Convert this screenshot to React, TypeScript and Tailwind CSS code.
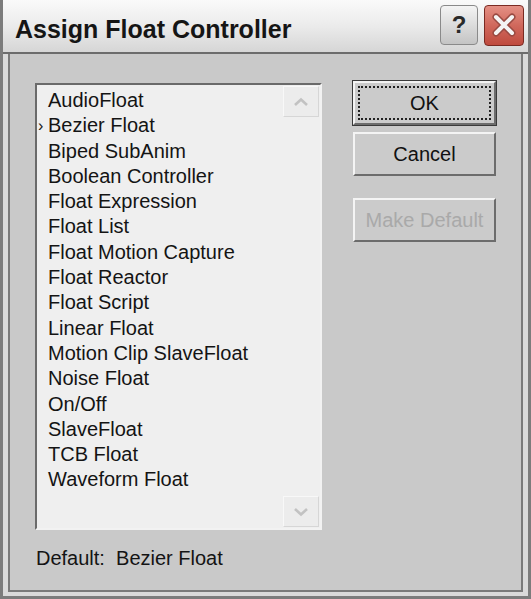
const items = [
  "AudioFloat",
  "Bezier Float",
  "Biped SubAnim",
  "Boolean Controller",
  "Float Expression",
  "Float List",
  "Float Motion Capture",
  "Float Reactor",
  "Float Script",
  "Linear Float",
  "Motion Clip SlaveFloat",
  "Noise Float",
  "On/Off",
  "SlaveFloat",
  "TCB Float",
  "Waveform Float",
];

function ScrollButton({ up }: { up?: boolean }) {
  return (
    <div className="flex h-[31px] w-[36px] items-center justify-center border border-t-[#f8f8f8] border-l-[#f8f8f8] border-r-[#d6d6d6] border-b-[#d6d6d6] bg-[#ececec]">
      <svg width="16" height="10" viewBox="0 0 16 10" className={up ? "" : "rotate-180"}>
        <path d="M2 8 L8 2.5 L14 8" fill="none" stroke="#c2c2c2" strokeWidth="2.6" />
      </svg>
    </div>
  );
}

function DialogButton({
  children,
  focused,
  disabled,
}: {
  children: string;
  focused?: boolean;
  disabled?: boolean;
}) {
  return (
    <button
      className={
        "relative h-[44px] w-[143px] border-2 border-t-[#f4f4f4] border-l-[#f4f4f4] border-r-[#6c6c6c] border-b-[#6c6c6c] bg-[#cbcbcb] text-[20px] leading-none " +
        (focused ? "outline outline-1 outline-[#3a3a3a] " : "") +
        (disabled ? "text-[#a9a9a9]" : "text-[#111]")
      }
    >
      {focused && (
        <span className="absolute inset-[3px] border-2 border-dotted border-[#222]" />
      )}
      {children}
    </button>
  );
}

export default function App() {
  return (
    <div
      className="flex h-[599px] w-[531px] flex-col overflow-hidden border-l-[3px] border-r-[3px] border-b-[3px] border-[#7c7c7c] bg-[#dadada]"
      style={{ fontFamily: '"Liberation Sans", Arial, sans-serif' }}
    >
      <div className="flex h-[54px] shrink-0 items-center justify-between border-b-2 border-[#6c6c6c] bg-gradient-to-b from-[#fafafa] via-[#ebebeb] to-[#d6d6d6] pl-[12px] pr-[4px]">
        <span className="pt-[6px] text-[25px] font-bold leading-none text-[#151515]">
          Assign Float Controller
        </span>
        <div className="flex gap-[6px] pb-[2px]">
          <div className="flex h-[40px] w-[38px] items-center justify-center rounded-[4px] border border-[#8a8a8a] bg-gradient-to-b from-[#f4f4f4] to-[#c4c4c4] text-[24px] font-bold text-[#2a2a2a]">
            ?
          </div>
          <div className="flex h-[41px] w-[40px] items-center justify-center rounded-[4px] border border-[#7a2a22] bg-gradient-to-b from-[#e49085] via-[#d0685c] to-[#bf4a3e]">
            <svg width="26" height="26" viewBox="0 0 26 26">
              <path d="M5 5 L21 21 M21 5 L5 21" stroke="#9a4a42" strokeWidth="7" strokeLinecap="round" />
              <path d="M5 5 L21 21 M21 5 L5 21" stroke="#f4f4f4" strokeWidth="4" strokeLinecap="round" />
            </svg>
          </div>
        </div>
      </div>

      <div className="flex flex-1 px-[5px] pb-[4px]">
        <div className="flex flex-1 gap-[31px] border-l-2 border-r-2 border-b-2 border-[#7a7a7a] bg-[#c9c9c9] pl-[25px] pt-[29px]">
          <div className="flex flex-col">
            <div className="flex h-[447px] w-[287px] border-2 border-t-[#6a6a6a] border-l-[#6a6a6a] border-r-[#f2f2f2] border-b-[#f2f2f2] bg-[#efefef]">
              <div className="flex flex-1 flex-col pt-[3px] text-[20px] leading-[25.3px] text-[#141414]">
                {items.map((item) => (
                  <div key={item} className="flex">
                    <span className="w-[11px] pl-[1px] text-[16px] leading-[25.3px]">
                      {item === "Bezier Float" ? "›" : ""}
                    </span>
                    <span>{item}</span>
                  </div>
                ))}
              </div>
              <div className="flex flex-col justify-between py-[1px] pr-[1px]">
                <ScrollButton up />
                <ScrollButton />
              </div>
            </div>
            <div className="mt-[16px] pl-[1px] text-[20px] leading-[24px] text-[#141414]">
              Default:&nbsp; Bezier Float
            </div>
          </div>

          <div className="-mt-[2px] flex flex-col">
            <div className="flex flex-col gap-[7px]">
              <DialogButton focused>OK</DialogButton>
              <DialogButton>Cancel</DialogButton>
            </div>
            <div className="mt-[22px]">
              <DialogButton disabled>Make Default</DialogButton>
            </div>
          </div>
        </div>
      </div>
    </div>
  );
}
